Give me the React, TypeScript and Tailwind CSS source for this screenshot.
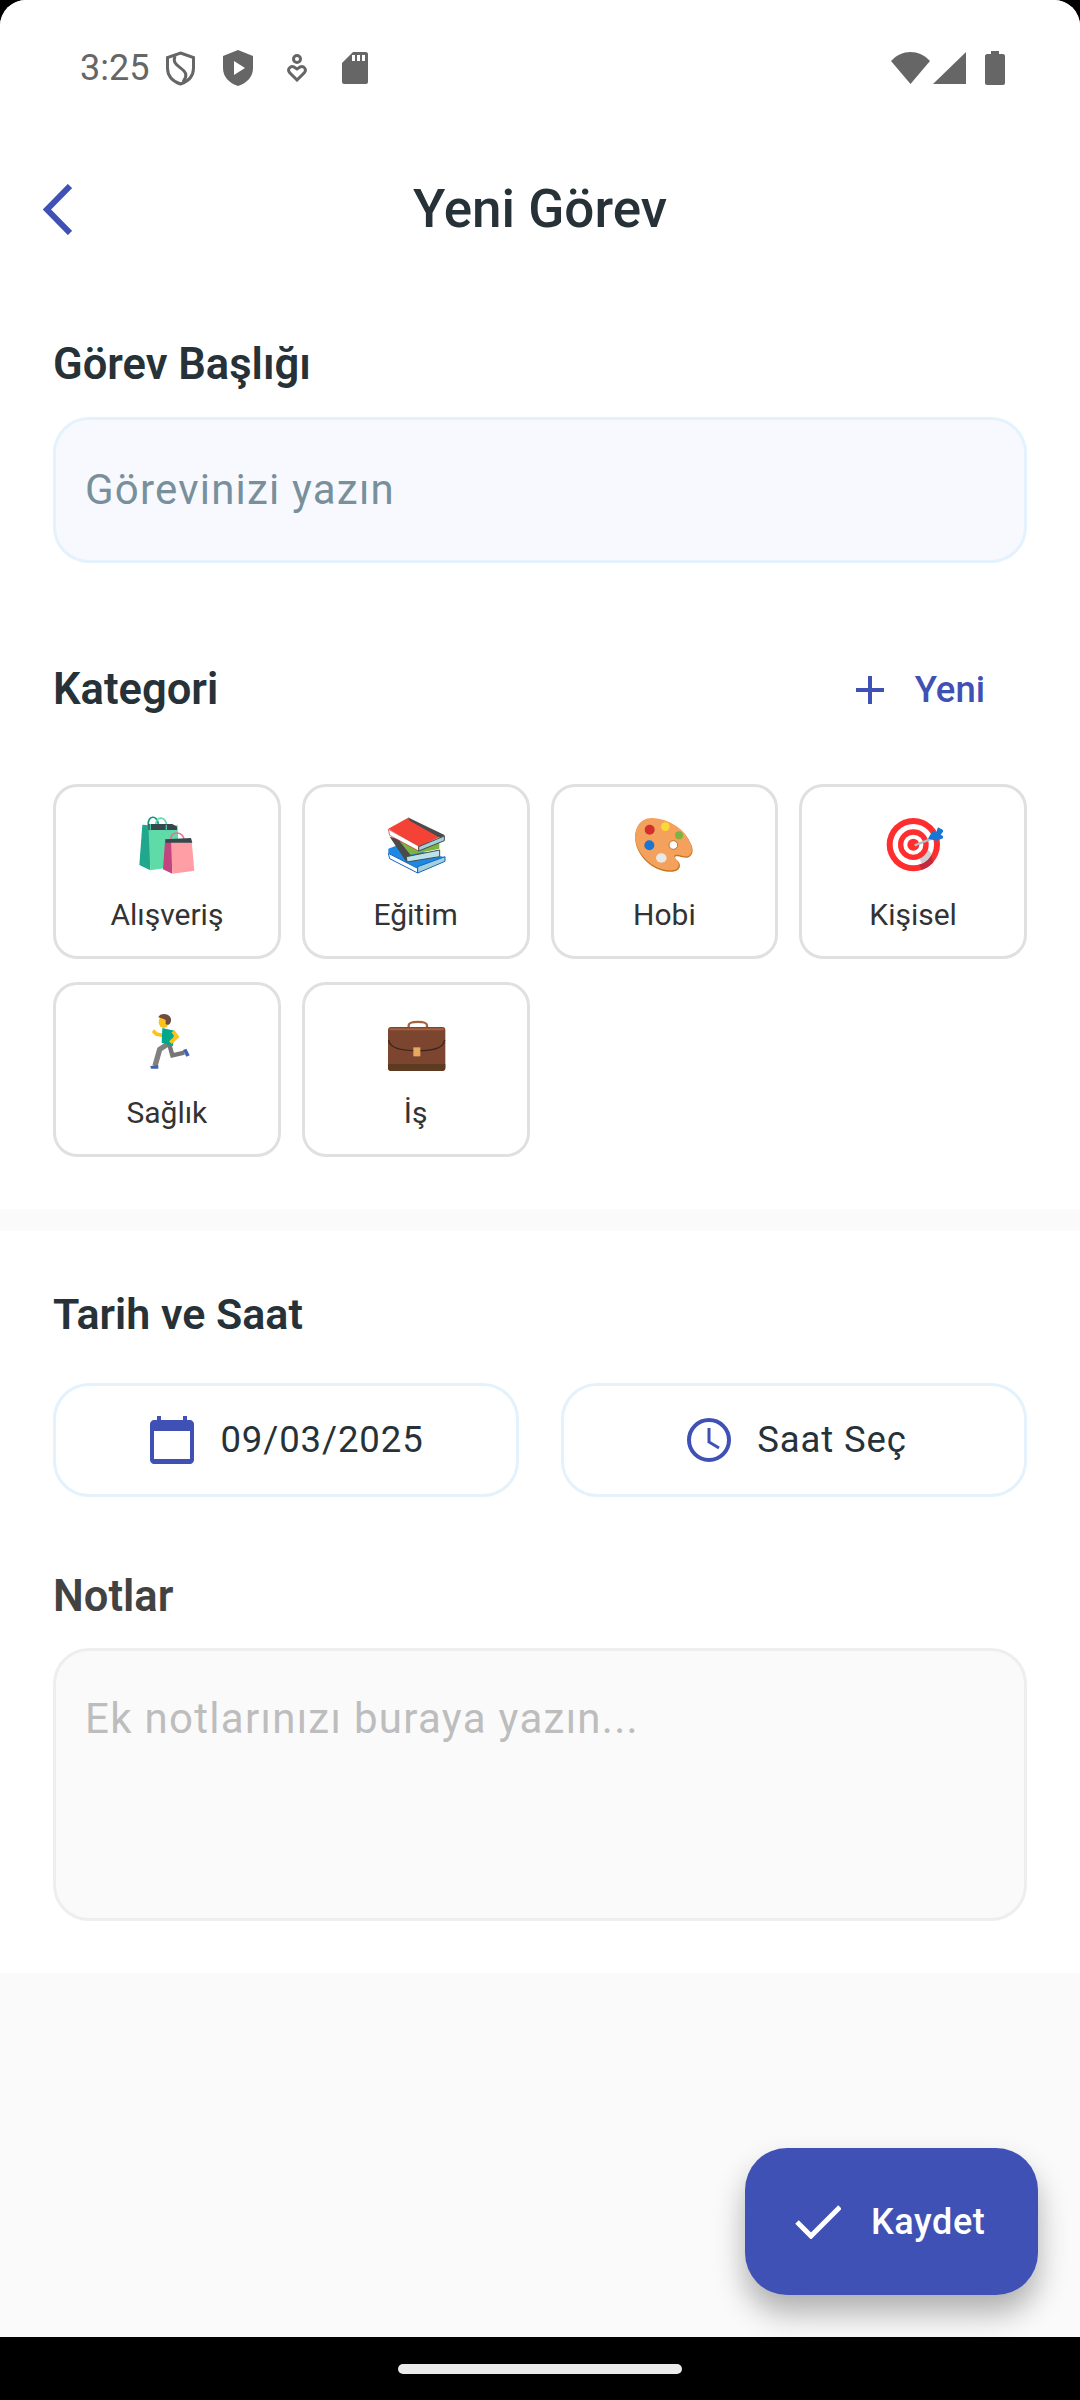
import type { ReactNode } from "react";

const INDIGO = "#3f51b5";

function Emoji({ box, children }: { box: string; children: ReactNode }) {
  return (
    <svg className="w-[60px] h-[60px] shrink-0" viewBox={box} aria-hidden>
      {children}
    </svg>
  );
}

const BagsEmoji = () => (
  <Emoji box="50 42 180 180">
    <path d="M84 76C80 46 112 42 114 74" fill="none" stroke="#12967f" strokeWidth="5" />
    <path d="M106 76C106 46 140 48 138 78" fill="none" stroke="#62dca8" strokeWidth="5" />
    <path d="M66 74L57 195L90 211L88 76Z" fill="#1fa88e" />
    <path d="M84 76H172L176 198L90 211Z" fill="#5fdba7" />
    <path d="M84 72H156L170 80V90H84Z" fill="#37474f" />
    <path d="M90 72L90 94M138 74L138 94" stroke="#4fc79b" strokeWidth="4" />
    <path d="M151 118C150 92 192 92 191 122" fill="none" stroke="#ee6c96" strokeWidth="5" />
    <path d="M134 124L128 208L156 221V126Z" fill="#c2457f" />
    <path d="M152 122H214L222 212L156 221Z" fill="#ff9fa5" />
    <path d="M134 118L212 114L216 128H136Z" fill="#37474f" />
  </Emoji>
);

const BooksEmoji = () => (
  <Emoji box="795 42 180 180">
    <path d="M802 146L825 137L972 172L892 206L802 160Z" fill="#1e88e5" />
    <path d="M802 160L890 205V219L806 176Z" fill="#fff" stroke="#1565c0" strokeWidth="3" />
    <path d="M890 200L972 170V184L890 219Z" fill="#a4d0dc" stroke="#1565c0" strokeWidth="3" />
    <path d="M806 110L840 120L872 160L856 186Z" fill="#4a4a4a" />
    <path d="M836 124L955 128V146L868 164Z" fill="#7cb342" />
    <path d="M856 170L956 150V170L858 186Z" fill="#b9e2ea" stroke="#4a4a4a" strokeWidth="3" />
    <path d="M802 86L860 54L958 110L893 140Z" fill="#f44336" />
    <path d="M860 52L972 106L958 114L866 62Z" fill="#4a4a4a" />
    <path d="M802 88L893 138V153L806 106Z" fill="#fff" stroke="#c62828" strokeWidth="2" />
    <path d="M893 140L970 108V122L893 153Z" fill="#a4d0dc" stroke="#4a4a4a" strokeWidth="3" />
  </Emoji>
);

const PaletteEmoji = () => (
  <Emoji box="44 42 180 180">
    <path d="M100 57C60 53 44 90 48 122C53 165 95 212 150 215C182 217 188 196 176 184C160 170 166 164 190 172C216 179 226 156 216 134C196 86 150 60 100 57Z" fill="#c8741f" />
    <path d="M100 54C60 52 45 88 48 118C53 160 95 208 150 211C180 213 184 194 172 180C158 166 166 160 190 168C214 175 224 154 214 132C194 84 150 58 100 54Z" fill="#f4a15d" />
    <circle cx="162" cy="135" r="13" fill="#fff" stroke="#c8741f" strokeWidth="3" />
    <circle cx="91" cy="89" r="15" fill="#d32f2f" />
    <circle cx="138" cy="80" r="13" fill="#fdd835" />
    <circle cx="179" cy="106" r="12" fill="#7cb342" />
    <circle cx="90" cy="136" r="15" fill="#1976d2" />
    <ellipse cx="126" cy="174" rx="16" ry="14" fill="#e8e8e8" />
  </Emoji>
);

const TargetEmoji = () => (
  <Emoji box="789 42 180 180">
    <circle cx="880" cy="134" r="80" fill="#ff2e2e" />
    <path d="M940 187A80 80 0 0 1 905 210L890 180L930 150Z" fill="#c62840" />
    <circle cx="880" cy="134" r="62" fill="#fff" />
    <path d="M935 162A62 62 0 0 1 905 191L895 165L920 145Z" fill="#d0d0d0" />
    <circle cx="880" cy="134" r="46" fill="#ff2e2e" />
    <circle cx="880" cy="134" r="30" fill="#fff" />
    <circle cx="880" cy="134" r="18" fill="#ff2e2e" />
    <path d="M884 136L940 114" stroke="#b0bec5" strokeWidth="7" />
    <path d="M924 116L938 92L948 98L954 82L972 92L962 104L975 112L950 122Z" fill="#1976d2" />
  </Emoji>
);

const RunnerEmoji = () => (
  <Emoji box="50 36 180 180">
    <path d="M146 130L118 148L104 198" fill="none" stroke="#808080" strokeWidth="16" />
    <path d="M146 130L156 166L192 158" fill="none" stroke="#757575" strokeWidth="13" />
    <path d="M90 198L114 196L114 206L92 206Z" fill="#3f62b5" />
    <path d="M188 150L198 146L208 166L198 170Z" fill="#3f62b5" />
    <path d="M126 106L108 102L98 92" fill="none" stroke="#fcc21b" strokeWidth="11" />
    <path d="M126 84L162 92L158 138L124 128Z" fill="#00a88e" />
    <path d="M158 94L170 110L150 128" fill="none" stroke="#fcc21b" strokeWidth="11" />
    <ellipse cx="130" cy="66" rx="15" ry="18" fill="#fcc21b" />
    <path d="M114 52C118 36 154 38 152 62C150 76 140 76 136 72L136 60C128 56 120 54 114 52Z" fill="#6d4c41" />
  </Emoji>
);

const BriefcaseEmoji = () => (
  <Emoji box="795 36 180 180">
    <path d="M863 84V76C863 62 918 62 918 76V84" fill="none" stroke="#a5623c" strokeWidth="7" />
    <rect x="801" y="81" width="172" height="132" rx="9" fill="#7b4530" />
    <path d="M801 192H973V204C973 209 969 213 964 213H810C805 213 801 209 801 204Z" fill="#5d3a22" />
    <path d="M803 120C805 142 830 152 888 152C945 152 968 142 971 120" fill="none" stroke="#3e2418" strokeWidth="4" />
    <path d="M806 88H968" stroke="#a5623c" strokeWidth="6" />
    <rect x="877" y="142" width="21" height="27" fill="#e8a860" />
  </Emoji>
);

function StatusBar() {
  return (
    <div className="h-[136px] pl-[80px] pr-[75px] flex items-center justify-between text-[#666666]">
      <div className="flex items-center">
        <span className="text-[36px] leading-none w-[86px]">3:25</span>
        <svg className="w-[29px] h-[35px]" viewBox="0 0 29 35" fill="none" stroke="#666666" strokeWidth="3" aria-hidden>
          <path d="M14.5 2L27.5 6.5V17C27.5 25 22 30.5 14.5 33C7 30.5 1.5 25 1.5 17V6.5Z" />
          <path d="M9 5C6 13 13 15 18 20C21 23 20 27 17 31" />
        </svg>
        <svg className="w-[30px] h-[36px] ml-[28px]" viewBox="0 0 30 36" aria-hidden>
          <path d="M15 0L30 6V18C30 27 24 33 15 36C6 33 0 27 0 18V6Z" fill="#666666" />
          <path d="M11 11L22 18L11 25Z" fill="#fff" />
        </svg>
        <svg className="w-[20px] h-[28px] ml-[34px]" viewBox="0 0 20 28" fill="none" stroke="#666666" strokeWidth="3" aria-hidden>
          <circle cx="10" cy="5" r="3.5" />
          <path d="M10 26L2.5 18.5C0 15 3.5 11.5 7 13L10 15L13 13C16.5 11.5 20 15 17.5 18.5Z" />
        </svg>
        <svg className="w-[26px] h-[32px] ml-[35px]" viewBox="0 0 26 32" aria-hidden>
          <path d="M11 0H24C25 0 26 1 26 2V30C26 31 25 32 24 32H2C1 32 0 31 0 30V11Z" fill="#666666" />
          <path d="M10 3H13V9H10ZM15 3H18V9H15ZM20 3H23V9H20Z" fill="#fff" />
        </svg>
      </div>
      <div className="flex items-center">
        <svg className="w-[39px] h-[32px]" viewBox="0 0 39 32" aria-hidden>
          <path d="M19.5 32L0 9C11 -3 28 -3 39 9Z" fill="#666666" />
        </svg>
        <svg className="w-[33px] h-[32px] ml-[3px]" viewBox="0 0 33 32" aria-hidden>
          <path d="M33 0V32H0Z" fill="#666666" />
        </svg>
        <svg className="w-[20px] h-[34px] ml-[19px]" viewBox="0 0 20 34" aria-hidden>
          <path d="M6 0H14V3H18C19 3 20 4 20 5V32C20 33 19 34 18 34H2C1 34 0 33 0 32V5C0 4 1 3 2 3H6Z" fill="#666666" />
        </svg>
      </div>
    </div>
  );
}

const categories = [
  { name: "Alışveriş", icon: <BagsEmoji /> },
  { name: "Eğitim", icon: <BooksEmoji /> },
  { name: "Hobi", icon: <PaletteEmoji /> },
  { name: "Kişisel", icon: <TargetEmoji /> },
  { name: "Sağlık", icon: <RunnerEmoji /> },
  { name: "İş", icon: <BriefcaseEmoji /> },
];

export default function App() {
  return (
    <div className="relative w-[1080px] h-[2400px] bg-black flex flex-col overflow-hidden font-['Roboto',sans-serif]">
      <div className="h-[2337px] bg-[#fafafa] rounded-t-[26px] overflow-hidden flex flex-col">
        <div className="bg-white h-[1209px]">
          <StatusBar />

          {/* Header */}
          <div className="relative h-[146px] flex items-center justify-center">
            <button type="button" className="absolute left-[43px] top-[48px] w-[29px] h-[51px]" aria-label="Geri">
              <svg className="w-full h-full" viewBox="0 0 29 51" fill="none" stroke={INDIGO} strokeWidth="6" aria-hidden>
                <path d="M27 2L4 25.5L27 49" />
              </svg>
            </button>
            <h1 className="text-[53px] leading-none font-medium text-[#263238]">Yeni Görev</h1>
          </div>

          <div className="px-[53px]">
            <p className="mt-[58px] h-[50px] flex items-center text-[43.5px] font-semibold text-[#263238]">Görev Başlığı</p>
            <input
              readOnly
              placeholder="Görevinizi yazın"
              className="mt-[27px] w-full h-[146px] px-[29px] pb-[2px] rounded-[36px] border-[3px] border-[#e3f2fd] bg-[#f8f9fe] text-[42px] tracking-[1.2px] outline-none placeholder:text-[#78909c]"
            />

            <div className="mt-[102px] h-[50px] flex items-center justify-between">
              <p className="text-[43.5px] font-semibold text-[#263238]">Kategori</p>
              <button type="button" className="flex items-center pr-[42px] text-[#3f51b5]">
                <svg className="w-[30px] h-[30px]" viewBox="0 0 30 30" fill="none" stroke={INDIGO} strokeWidth="4" aria-hidden>
                  <path d="M15 1V29M1 15H29" />
                </svg>
                <span className="ml-[30px] text-[36.5px] font-medium">Yeni</span>
              </button>
            </div>

            <div className="mt-[69px] grid grid-cols-4 gap-x-[21px] gap-y-[23px]">
              {categories.map((c) => (
                <button
                  key={c.name}
                  type="button"
                  className="h-[175px] rounded-[24px] border-[3px] border-[#e0e0e0] bg-white flex flex-col items-center pt-[27px]"
                >
                  {c.icon}
                  <span className="mt-[23px] text-[30px] leading-[36px] text-[#333333]">{c.name}</span>
                </button>
              ))}
            </div>
          </div>
        </div>

        <div className="h-[22px] shrink-0" />

        <div className="bg-white h-[742px] px-[53px] pt-[58px]">
          <p className="h-[50px] flex items-center text-[43px] font-semibold text-[#263238]">Tarih ve Saat</p>
          <div className="mt-[44px] grid grid-cols-2 gap-x-[42px]">
            <button type="button" className="h-[114px] rounded-[36px] border-[3px] border-[#e3f2fd] bg-white flex items-center justify-center gap-[26px] pl-[2px]">
              <svg className="w-[44px] h-[48px]" viewBox="0 0 44 48" aria-hidden>
                <path d="M7 0H11V4H33V0H37V4H40C42 4 44 6 44 8V44C44 46 42 48 40 48H4C2 48 0 46 0 44V8C0 6 2 4 4 4H7Z" fill={INDIGO} />
                <rect x="4" y="15" width="36" height="28" fill="#fff" />
              </svg>
              <span className="text-[36.5px] tracking-[0.9px] text-[#263238]">09/03/2025</span>
            </button>
            <button type="button" className="h-[114px] rounded-[36px] border-[3px] border-[#e3f2fd] bg-white flex items-center justify-center gap-[26px] pl-[6px]">
              <svg className="w-[44px] h-[44px]" viewBox="0 0 44 44" fill="none" stroke={INDIGO} aria-hidden>
                <circle cx="22" cy="22" r="20" strokeWidth="4" />
                <path d="M22 10V24L32 30" strokeWidth="3" />
              </svg>
              <span className="text-[36.5px] tracking-[0.9px] text-[#263238]">Saat Seç</span>
            </button>
          </div>

          <p className="mt-[75px] h-[50px] flex items-center text-[43.5px] font-semibold text-[#424242]">Notlar</p>
          <textarea
            readOnly
            placeholder="Ek notlarınızı buraya yazın..."
            className="block mt-[26px] w-full h-[273px] px-[29px] pt-[45px] resize-none rounded-[36px] border-[3px] border-[#eeeeee] bg-[#fafafa] text-[42px] leading-[46px] tracking-[1.3px] outline-none placeholder:text-[#bdbdbd]"
          />
        </div>
      </div>

      {/* Nav bar */}
      <div className="flex-1 flex items-center justify-center">
        <div className="w-[284px] h-[10px] rounded-full bg-[#ebebeb]" />
      </div>

      {/* Save button */}
      <button
        type="button"
        className="absolute left-[745px] top-[2148px] w-[293px] h-[147px] rounded-[42px] bg-[#3f51b5] flex items-center pl-[50px] shadow-[0_18px_30px_rgba(0,0,0,0.3)]"
      >
        <svg className="w-[46px] h-[34px]" viewBox="0 0 46 34" fill="none" stroke="#fff" strokeWidth="5" aria-hidden>
          <path d="M2 17L16 31L45 2" />
        </svg>
        <span className="ml-[30px] text-[36px] font-medium tracking-[0.6px] text-white">Kaydet</span>
      </button>
    </div>
  );
}
